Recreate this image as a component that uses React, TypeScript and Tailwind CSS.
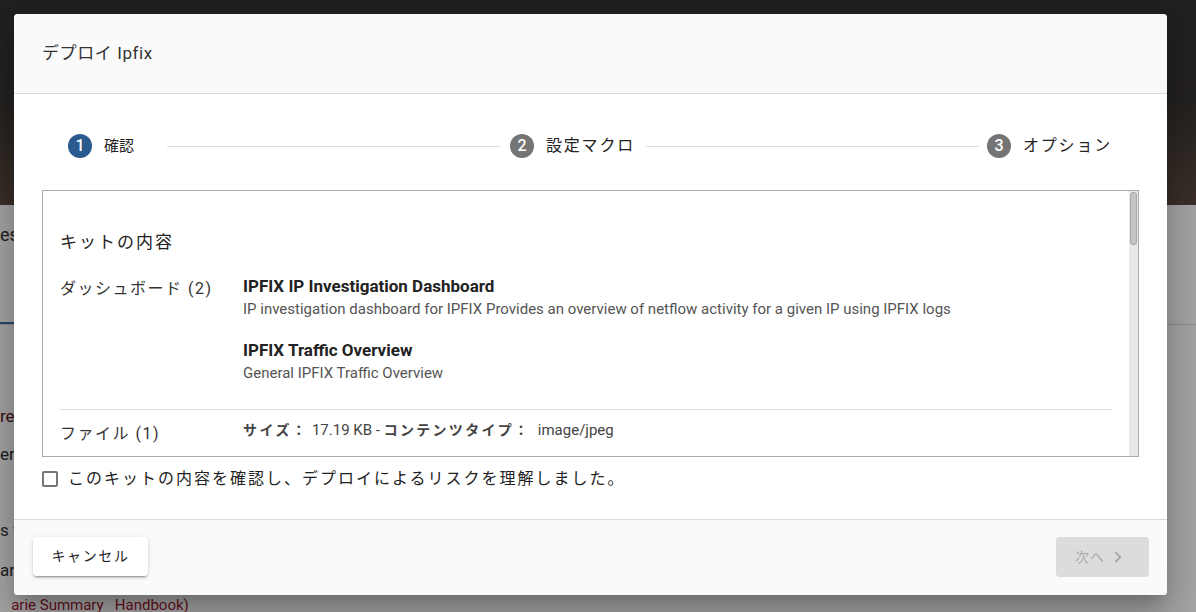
import React from "react";
import { ChevronRight } from "lucide-react";

const FONT = "font-['Roboto','Noto_Sans_CJK_JP',sans-serif]";

function Step({ n, label, active, labelClass }: { n: number; label: string; active?: boolean; labelClass?: string }) {
  return (
    <div className="flex items-center">
      <div
        className={`w-[24px] h-[24px] rounded-full flex items-center justify-center text-white text-[16px] font-medium ${
          active ? "bg-[#2b5a8e]" : "bg-[#757575]"
        }`}
      >
        {n}
      </div>
      <span className={`ml-[12px] text-[#222] ${labelClass ?? "text-[16px] tracking-[1.8px]"}`}>{label}</span>
    </div>
  );
}

export default function App() {
  return (
    <div className={`relative w-[1196px] h-[612px] overflow-hidden bg-white ${FONT}`}>
      {/* Background page */}
      <div className="flex flex-col">
        <div className="h-[205px] bg-gradient-to-b from-[#343434] via-[#3a3634] to-[#5c4a3f]" />
        <div className="h-[120px] border-b border-[#dcdcdc] relative">
          <div className="pt-[18px] text-[18px] text-[#333] leading-[24px]">es</div>
          <div className="absolute left-0 bottom-0 w-[60px] h-[2px] bg-[#3f6fa8]" />
        </div>
        <div className="pt-[72px] text-[17px] leading-[38px] text-[#5a2020]">
          <div>re</div>
          <div className="text-[#333]">er</div>
          <div className="mt-[38px] text-[#333]">s w</div>
          <div className="text-[#333] leading-[42px]">aric</div>
          <div className="mt-[4px] text-[#a02030] text-[15px] leading-[20px] whitespace-pre">{"   arie Summary   Handbook)"}</div>
        </div>
      </div>

      {/* Overlay */}
      <div className="absolute inset-0 bg-black/[0.35]" />

      {/* Modal */}
      <div className="absolute left-[14px] top-[14px] w-[1153px] h-[581px] rounded-[4px] bg-white flex flex-col overflow-hidden shadow-[0_11px_15px_-7px_rgba(0,0,0,0.2),0_24px_38px_3px_rgba(0,0,0,0.14),0_9px_46px_8px_rgba(0,0,0,0.12)]">
        {/* Header */}
        <div className="h-[80px] shrink-0 bg-[#fafafa] border-b border-[#dadada] flex items-center px-[28px]">
          <span className="text-[17px] text-[#333] tracking-[0.6px]">デプロイ Ipfix</span>
        </div>

        {/* Body */}
        <div className="flex-1 flex flex-col px-[28px] pt-[40px]">
          {/* Stepper */}
          <div className="flex items-center pl-[26px] pr-[27px] h-[24px]">
            <Step n={1} label="確認" active labelClass="text-[15px]" />
            <div className="flex-1 h-px bg-[#dddddd] ml-[33px] mr-[10px]" />
            <Step n={2} label="設定マクロ" />
            <div className="flex-1 h-px bg-[#dddddd] ml-[11px] mr-[8px]" />
            <Step n={3} label="オプション" />
          </div>

          {/* Content box */}
          <div className="mt-[32px] h-[267px] border border-[#aaaaaa] flex overflow-hidden">
            <div className="flex-1 overflow-hidden pl-[17px] pr-[17px] pt-[39px]">
              <div className="text-[17px] leading-[24px] tracking-[2px] text-[#222]">キットの内容</div>
              <div className="mt-[21px] flex">
                <div className="w-[183px] shrink-0 pt-[3px] text-[16px] leading-[22px] tracking-[1.5px] text-[#333]">
                  ダッシュボード (2)
                </div>
                <div className="flex-1 flex flex-col">
                  <div className="text-[17px] leading-[22px] font-bold text-[#222]">IPFIX IP Investigation Dashboard</div>
                  <div className="mt-[2px] text-[15px] leading-[20px] text-[#555]">
                    IP investigation dashboard for IPFIX Provides an overview of netflow activity for a given IP using IPFIX logs
                  </div>
                  <div className="mt-[20px] text-[17px] leading-[22px] font-bold text-[#222]">IPFIX Traffic Overview</div>
                  <div className="mt-[2px] text-[15px] leading-[20px] text-[#555]">General IPFIX Traffic Overview</div>
                </div>
              </div>
              <div className="mt-[26px] border-t border-[#e0e0e0] flex">
                <div className="w-[183px] shrink-0 pt-[13px] text-[16px] leading-[22px] tracking-[1.5px] text-[#333]">
                  ファイル (1)
                </div>
                <div className="pt-[10px] text-[15px] leading-[20px] text-[#444] whitespace-pre">
                  <span className="font-bold tracking-[2.4px] text-[14px]">サイズ：</span>
                  <span> 17.19 KB - </span>
                  <span className="font-bold tracking-[2.3px] text-[14px]">コンテンツタイプ：</span>
                  <span>  image/jpeg</span>
                </div>
              </div>
            </div>
            {/* Scrollbar */}
            <div className="w-[9px] shrink-0 bg-[#e8e8e8] flex flex-col pt-[1px]">
              <div className="h-[53px] mx-[1px] rounded-[3px] bg-[#c4c4c4] border border-[#a8a8a8]" />
            </div>
          </div>

          {/* Checkbox */}
          <div className="mt-[14px] flex items-center h-[16px]">
            <div className="w-[16px] h-[16px] rounded-[2px] border-2 border-[#757575] shrink-0" />
            <span className="ml-[10px] text-[16px] tracking-[2px] text-[#222]">
              このキットの内容を確認し、デプロイによるリスクを理解しました。
            </span>
          </div>
        </div>

        {/* Footer */}
        <div className="h-[76px] shrink-0 bg-[#fafafa] border-t border-[#dadada] flex items-start justify-between pl-[19px] pr-[18px] pt-[17px]">
          <button className="h-[39px] w-[115px] rounded-[4px] bg-white text-[14px] tracking-[1.6px] text-[#222] flex items-center justify-center shadow-[0_3px_1px_-2px_rgba(0,0,0,0.2),0_2px_2px_0_rgba(0,0,0,0.14),0_1px_5px_0_rgba(0,0,0,0.12)]">
            キャンセル
          </button>
          <button className="h-[40px] w-[93px] rounded-[4px] bg-[#dcdcdc] text-[14px] tracking-[1px] text-[#ababab] flex items-center justify-center gap-[4px] pr-[3px]">
            <span>次へ</span>
            <ChevronRight size={18} strokeWidth={2.5} className="text-[#ababab]" />
          </button>
        </div>
      </div>
    </div>
  );
}
